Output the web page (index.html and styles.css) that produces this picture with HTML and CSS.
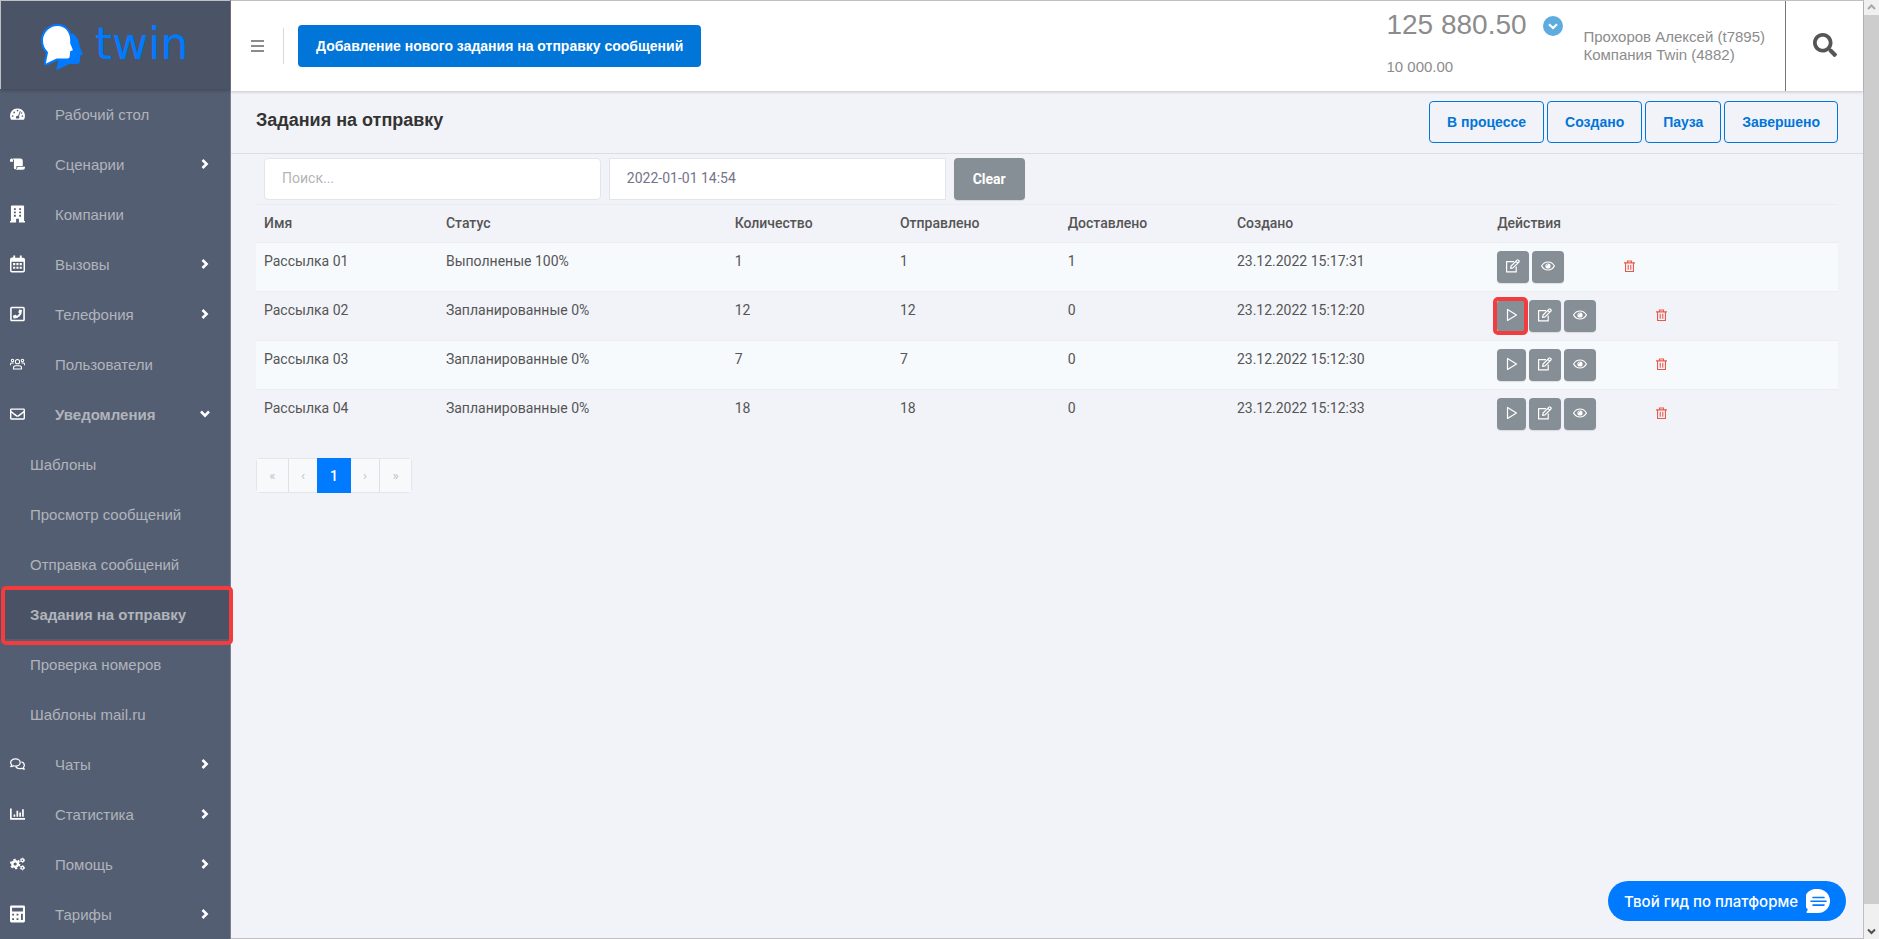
FILE: index.html
```html
<!DOCTYPE html>
<html lang="ru">
<head>
  <meta charset="UTF-8" />
  <title>Задания на отправку</title>
  <link rel="stylesheet" href="styles.css">
</head>
<body>
  <!-- icons -->
  <svg class="sprite" aria-hidden="true">
    <symbol id="i-dash" viewBox="0 0 16 16"><path fill-rule="evenodd" d="M8 2a8 8 0 0 0-7 11.8c.2.3.4.4.7.4h12.600c.3 0 .5-.1.7-.4A8 8 0 0 0 8 2zM8 3.400a.9.9 0 1 1 0 1.800.9.9 0 0 1 0-1.800zM2.800 9.200a.9.9 0 1 1 0 1.800.9.9 0 0 1 0-1.800zM4.400 5.400a.9.9 0 1 1 0 1.800.9.9 0 0 1 0-1.800zM10.600 4.700l.9.4-1.900 5.300a1.700 1.700 0 0 1-.2 2.300H6.700a1.700 1.700 0 0 1 1.900-2.700zM13.200 9.200a.9.9 0 1 1 0 1.800.9.9 0 0 1 0-1.800zM12.400 6a.8.8 0 1 1 0 1.600.8.8 0 0 1 0-1.600z"/></symbol>
    <symbol id="i-scroll" viewBox="0 0 16 16"><path d="M0 3.600A1.600 1.600 0 0 1 3.200 3.600V5.600H.6A.6.6 0 0 1 0 5zM2.500 2H11a2.600 2.600 0 0 1 2.600 2.600V10H6.800v2.200a1.300 1.300 0 0 1-2.600 0V4.500C4.200 3.400 3.500 2.500 2.500 2zM7.800 11H16v.6a2.500 2.500 0 0 1-2.500 2.500H6c1.200-.5 1.800-1.300 1.800-2.100z"/></symbol>
    <symbol id="i-building" viewBox="0 0 16 18"><path fill-rule="evenodd" d="M1 1c0-.6.3-1 1-1h12c.7 0 1 .4 1 1v15.500h1V18H9.500v-4h-3v4H0v-1.500h1zM4.200 2.800v2h2v-2zM9.800 2.800v2h2v-2zM4.200 6.300v2h2v-2zM9.800 6.300v2h2v-2zM4.200 9.800v2h2v-2zM9.800 9.800v2h2v-2z"/></symbol>
    <symbol id="i-calendar" viewBox="0 0 16 18"><path fill-rule="evenodd" d="M3.500 0h2v2.200h5V0h2v2.200H14a2 2 0 0 1 2 2V16a2 2 0 0 1-2 2H2a2 2 0 0 1-2-2V4.200a2 2 0 0 1 2-2h1.500zM1.600 6.500V16c0 .2.2.4.4.4h12c.2 0 .4-.2.4-.4V6.500z"/><path d="M3.300 8h2.300v2.300H3.300zM6.800 8h2.300v2.300H6.800zM10.300 8h2.300v2.300h-2.300zM3.300 11.800h2.300v2.300H3.300zM6.800 11.800h2.300v2.300H6.800zM10.300 11.800h2.300v2.300h-2.300z"/></symbol>
    <symbol id="i-phone" viewBox="0 0 16 16"><rect x="1" y="1" width="14" height="14" rx="1" fill="none" stroke="currentColor" stroke-width="1.700"/><path d="M10.300 3.200l2.100.5c.3.100.4.200.4.500a8.600 8.600 0 0 1-8.600 8.600c-.3 0-.4-.1-.5-.4l-.5-2.100c0-.3.100-.5.300-.6l2.300-.9c.2-.1.400 0 .6.100l.9 1.200a7 7 0 0 0 2.800-2.800L9 6.400c-.2-.2-.2-.4-.1-.600l.9-2.300c.1-.2.300-.4.500-.3z"/></symbol>
    <symbol id="i-users" viewBox="0 0 16 16"><g fill="none" stroke="currentColor" stroke-width="1.100"><circle cx="8" cy="5.500" r="2.300"/><circle cx="2.700" cy="4.200" r="1.300"/><circle cx="13.300" cy="4.200" r="1.300"/><path d="M3.700 13.400v-1.200c0-1.400 1-2.300 2.300-2.300h4c1.300 0 2.300.9 2.300 2.300v1.200zM.5 9.200V8.500c0-1 .6-1.500 1.400-1.500h2M15.500 9.200v-.7c0-1-.6-1.500-1.400-1.500h-2"/></g></symbol>
    <symbol id="i-mail" viewBox="0 0 512 512"><path d="M464 64H48C21.490 64 0 85.490 0 112v288c0 26.510 21.490 48 48 48h416c26.510 0 48-21.490 48-48V112c0-26.510-21.490-48-48-48zm0 48v40.805c-22.422 18.259-58.168 46.651-134.587 106.490-16.841 13.247-50.201 45.072-73.413 44.701-23.208.375-56.579-31.459-73.413-44.701C106.180 199.465 70.425 171.067 48 152.805V112h416zM48 400V214.398c22.914 18.251 55.409 43.862 104.938 82.646 21.857 17.205 60.134 55.186 103.062 54.955 42.717.231 80.509-37.199 103.053-54.947 49.528-38.783 82.032-64.401 104.947-82.653V400H48z"/></symbol>
    <symbol id="i-chats" viewBox="0 0 16 16"><g fill="none" stroke="currentColor" stroke-width="1.300" stroke-linejoin="round"><path d="M5.800 2.600c2.900 0 5.100 1.700 5.100 3.800s-2.200 3.900-5.100 3.900c-.8 0-1.500-.1-2.200-.4-.8.600-1.800.9-2.900.900.6-.6 1-1.300 1.100-2C1.100 8.200.7 7.300.7 6.400c0-2.100 2.200-3.800 5.100-3.800z"/><path d="M12.200 5.800c1.800.5 3.100 1.800 3.100 3.400 0 .9-.4 1.700-1.100 2.400.2.700.5 1.300 1.100 1.900-1.100 0-2.100-.4-2.900-.9-2.700.8-5.300-.1-6.300-1.800"/></g></symbol>
    <symbol id="i-chart" viewBox="0 0 16 16"><path d="M0 2h1.800v10.300H16V14H.8c-.5 0-.8-.3-.8-.8zM3.800 8.500h1.800V11H3.800zM6.900 4.500h1.800V11H6.900zM9.900 6.500h1.800V11H9.900zM12.900 3h1.800v8h-1.800z"/></symbol>
    <symbol id="i-cogs" viewBox="0 0 16 16"><circle cx="5.500" cy="8" r="3" fill="none" stroke="currentColor" stroke-width="2.600"/><circle cx="5.500" cy="8" r="4.700" fill="none" stroke="currentColor" stroke-width="1.800" stroke-dasharray="2.460 2.460"/><g fill="none" stroke="currentColor"><circle cx="13.200" cy="4" r="1.500" stroke-width="1.300"/><circle cx="13.200" cy="4" r="2.300" stroke-dasharray="1.200 1.200"/><circle cx="13.200" cy="12" r="1.500" stroke-width="1.300"/><circle cx="13.200" cy="12" r="2.300" stroke-dasharray="1.200 1.200"/></g></symbol>
    <symbol id="i-calc" viewBox="0 0 16 18"><path fill-rule="evenodd" d="M1.500 0h13A1.500 1.500 0 0 1 16 1.500v15a1.500 1.500 0 0 1-1.500 1.500h-13A1.500 1.500 0 0 1 0 16.500v-15A1.500 1.500 0 0 1 1.500 0zM2.200 2.300v4h11.600v-4zM2.300 8.700v2h2v-2zM7 8.700v2h2v-2zM11.700 8.700v6.700h2V8.700zM2.300 13.400v2h2v-2zM7 13.400v2h2v-2z"/></symbol>
    <symbol id="i-chevron" viewBox="0 0 8 10"><path d="M1.500 1L5.600 5 1.500 9" fill="none" stroke="currentColor" stroke-width="2.600"/></symbol>
    <symbol id="i-play" viewBox="0 0 14 14"><path d="M2.500 1.500v11L11.500 7z" fill="none" stroke="currentColor" stroke-width="1.200" stroke-linejoin="round"/></symbol>
    <symbol id="i-edit" viewBox="0 0 14 14"><g fill="none" stroke="currentColor" stroke-width="1.200" stroke-linejoin="round"><path d="M8 2.600H.6v10.300h9.600V7.500"/><path d="M4.600 9.400l.5-2.400L11 1.100c.4-.4.900-.4 1.300 0l.6.6c.4.400.4.900 0 1.300L7 8.900zM9.800 2.300l1.900 1.900"/></g></symbol>
    <symbol id="i-eye" viewBox="0 0 14 14"><path d="M.6 7C2 4.500 4.300 3 7 3s5 1.500 6.400 4C12 9.500 9.700 11 7 11S2 9.500.6 7z" fill="none" stroke="currentColor" stroke-width="1.200"/><circle cx="7" cy="7" r="2.600"/><path d="M5.600 6.700c0-.7.500-1.200 1.200-1.300" fill="none" stroke="#868e96" stroke-width=".7"/></symbol>
    <symbol id="i-trash" viewBox="0 0 12 14"><path d="M0 3h12M1.700 3v9.400h8.600V3M3.800 2.800V1h4.400v1.800M4.600 5v5.600M7.400 5v5.600" fill="none" stroke="currentColor" stroke-width="1.200"/></symbol>
  </svg>

  <div class="app">
    <aside class="sidebar">
      <a class="logo" href="#" aria-label="twin">
        <svg width="170" height="60" viewBox="0 -10 170 60">
          <path fill="#007bff" d="M31 9c5 3 7 8 7.500 13l3 7.500c.3.800 0 1.300-.8 1.500l-1.500.5-.4 6c-.1 1.600-1 2.500-2.500 2.500H28l-11 5.500c-1 .5-1.700-.2-1.500-1.200l2-8z"/>
          <path fill="#fff" stroke="#007bff" stroke-width="2" stroke-linejoin="round" d="M16.500 1C8 1 1 8 1 16.500c0 5 2 9 5 12L4 38.500c-.3 1.600.6 2.300 2 1.700l10-4.700h10.500c2 0 3-1 3.200-3l.4-4.500 2-.8c.8-.3 1-.8.700-1.500l-2.600-6.500C31 8 25 1 16.500 1z"/>
          <text class="logo-text" x="54" y="35">twin</text>
        </svg>
      </a>
      <nav class="menu">
        <a href="#"><svg class="icon"><use href="#i-dash"/></svg><span>Рабочий стол</span></a>
        <a href="#"><svg class="icon"><use href="#i-scroll"/></svg><span>Сценарии</span><svg class="arrow"><use href="#i-chevron"/></svg></a>
        <a href="#"><svg class="icon"><use href="#i-building"/></svg><span>Компании</span></a>
        <a href="#"><svg class="icon"><use href="#i-calendar"/></svg><span>Вызовы</span><svg class="arrow"><use href="#i-chevron"/></svg></a>
        <a href="#"><svg class="icon"><use href="#i-phone"/></svg><span>Телефония</span><svg class="arrow"><use href="#i-chevron"/></svg></a>
        <a href="#"><svg class="icon"><use href="#i-users"/></svg><span>Пользователи</span></a>
        <a href="#" class="open"><svg class="icon"><use href="#i-mail"/></svg><span>Уведомления</span><svg class="arrow"><use href="#i-chevron"/></svg></a>
        <a href="#" class="sub">Шаблоны</a>
        <a href="#" class="sub">Просмотр сообщений</a>
        <a href="#" class="sub">Отправка сообщений</a>
        <a href="#" class="sub active">Задания на отправку</a>
        <a href="#" class="sub">Проверка номеров</a>
        <a href="#" class="sub">Шаблоны mail.ru</a>
        <a href="#"><svg class="icon"><use href="#i-chats"/></svg><span>Чаты</span><svg class="arrow"><use href="#i-chevron"/></svg></a>
        <a href="#"><svg class="icon"><use href="#i-chart"/></svg><span>Статистика</span><svg class="arrow"><use href="#i-chevron"/></svg></a>
        <a href="#"><svg class="icon"><use href="#i-cogs"/></svg><span>Помощь</span><svg class="arrow"><use href="#i-chevron"/></svg></a>
        <a href="#"><svg class="icon"><use href="#i-calc"/></svg><span>Тарифы</span><svg class="arrow"><use href="#i-chevron"/></svg></a>
      </nav>
    </aside>

    <div class="page">
      <header class="topbar">
        <button class="burger" aria-label="Меню"><i></i><i></i><i></i></button>
        <div class="topbar-add">
          <button class="btn btn-primary">Добавление нового задания на отправку сообщений</button>
        </div>
        <div class="balance">
          <div class="balance-main">125 880.50
            <button class="balance-more" aria-label="Подробнее"><svg width="20" height="20" viewBox="0 0 20 20"><circle cx="10" cy="10" r="10" fill="#5dabdf"/><path d="M6 8.300l4 3.700 4-3.700" fill="none" stroke="#fff" stroke-width="2.200"/></svg></button>
          </div>
          <div class="balance-sub">10 000.00</div>
        </div>
        <div class="user">Прохоров Алексей (t7895)<br>Компания Twin (4882)</div>
        <button class="search" aria-label="Поиск">
          <svg width="24" height="24" viewBox="0 0 512 512"><path d="M505 442.700L405.300 343c-4.500-4.500-10.600-7-17-7H372c27.600-35.300 44-79.700 44-128C416 93.100 322.900 0 208 0S0 93.100 0 208s93.100 208 208 208c48.300 0 92.700-16.400 128-44v16.300c0 6.400 2.500 12.500 7 17l99.700 99.700c9.400 9.400 24.600 9.400 33.900 0l28.300-28.300c9.400-9.400 9.400-24.600.1-34zM208 336c-70.700 0-128-57.200-128-128 0-70.700 57.200-128 128-128 70.700 0 128 57.200 128 128 0 70.700-57.200 128-128 128z"/></svg>
        </button>
      </header>

      <main class="content">
        <div class="subheader">
          <h1>Задания на отправку</h1>
          <div class="statuses">
            <button class="btn btn-outline">В процессе</button>
            <button class="btn btn-outline">Создано</button>
            <button class="btn btn-outline">Пауза</button>
            <button class="btn btn-outline">Завершено</button>
          </div>
        </div>

        <div class="filters">
          <input type="text" class="rounded" placeholder="Поиск..." aria-label="Поиск">
          <input type="text" value="2022-01-01 14:54" aria-label="Дата">
          <button class="btn btn-gray clear">Clear</button>
        </div>

        <table class="tasks">
          <colgroup>
            <col class="c-name"><col class="c-status"><col class="c-count"><col class="c-sent"><col class="c-delivered"><col class="c-created"><col>
          </colgroup>
          <thead>
            <tr><th>Имя</th><th>Статус</th><th>Количество</th><th>Отправлено</th><th>Доставлено</th><th>Создано</th><th>Действия</th></tr>
          </thead>
          <tbody>
            <tr>
              <td>Рассылка 01</td><td>Выполненые 100%</td><td>1</td><td>1</td><td>1</td><td>23.12.2022 15:17:31</td>
              <td><div class="actions">
                <button class="btn-gray" aria-label="Изменить"><svg><use href="#i-edit"/></svg></button>
                <button class="btn-gray" aria-label="Просмотр"><svg><use href="#i-eye"/></svg></button>
                <button class="trash" aria-label="Удалить"><svg><use href="#i-trash"/></svg></button>
              </div></td>
            </tr>
            <tr>
              <td>Рассылка 02</td><td>Запланированные 0%</td><td>12</td><td>12</td><td>0</td><td>23.12.2022 15:12:20</td>
              <td><div class="actions">
                <button class="btn-gray play marked" aria-label="Запустить"><svg><use href="#i-play"/></svg></button>
                <button class="btn-gray" aria-label="Изменить"><svg><use href="#i-edit"/></svg></button>
                <button class="btn-gray" aria-label="Просмотр"><svg><use href="#i-eye"/></svg></button>
                <button class="trash" aria-label="Удалить"><svg><use href="#i-trash"/></svg></button>
              </div></td>
            </tr>
            <tr>
              <td>Рассылка 03</td><td>Запланированные 0%</td><td>7</td><td>7</td><td>0</td><td>23.12.2022 15:12:30</td>
              <td><div class="actions">
                <button class="btn-gray play" aria-label="Запустить"><svg><use href="#i-play"/></svg></button>
                <button class="btn-gray" aria-label="Изменить"><svg><use href="#i-edit"/></svg></button>
                <button class="btn-gray" aria-label="Просмотр"><svg><use href="#i-eye"/></svg></button>
                <button class="trash" aria-label="Удалить"><svg><use href="#i-trash"/></svg></button>
              </div></td>
            </tr>
            <tr>
              <td>Рассылка 04</td><td>Запланированные 0%</td><td>18</td><td>18</td><td>0</td><td>23.12.2022 15:12:33</td>
              <td><div class="actions">
                <button class="btn-gray play" aria-label="Запустить"><svg><use href="#i-play"/></svg></button>
                <button class="btn-gray" aria-label="Изменить"><svg><use href="#i-edit"/></svg></button>
                <button class="btn-gray" aria-label="Просмотр"><svg><use href="#i-eye"/></svg></button>
                <button class="trash" aria-label="Удалить"><svg><use href="#i-trash"/></svg></button>
              </div></td>
            </tr>
          </tbody>
        </table>

        <div class="pagination">
          <button disabled>«</button>
          <button disabled>‹</button>
          <button class="current">1</button>
          <button disabled>›</button>
          <button disabled>»</button>
        </div>
      </main>

      <button class="guide">Твой гид по платформе
        <svg width="24" height="24" viewBox="0 0 24 24"><path fill="#fff" d="M12 0a12 12 0 1 1 0 24H1.500c-1 0-1.300-.8-.8-1.500l1.200-2A12 12 0 0 1 12 0z"/><path d="M7 8.500h11M5 12.300h15M7 16.100h11" stroke="#007bff" stroke-width="1.600" stroke-linecap="round"/></svg>
      </button>
    </div>

    <div class="scrollbar">
      <svg width="15" height="15" viewBox="0 0 15 15"><path d="M4 9l3.500-3.500L11 9" fill="none" stroke="#a8a8a8" stroke-width="2"/></svg>
      <div class="thumb"></div>
      <svg width="15" height="15" viewBox="0 0 15 15"><path d="M4 5.500L7.500 9 11 5.500" fill="none" stroke="#505050" stroke-width="2"/></svg>
    </div>
  </div>
</body>
</html>
```
FILE: styles.css
```css
* {
  box-sizing: border-box;
}
body {
  margin: 0;
  height: 100vh;
  overflow: hidden;
  font-family: Roboto, sans-serif;
  font-size: 14px;
  line-height: 21px;
  color: #555;
  background: #f2f3f8;
}
button {
  font-family: inherit;
  border: 0;
  padding: 0;
  background: none;
}
a {
  color: inherit;
  text-decoration: none;
}
svg {
  display: block;
  fill: currentColor;
}
.sprite {
  display: none;
}
.app {
  display: flex;
  height: 100%;
}

/* sidebar */
.sidebar {
  flex: none;
  width: 231px;
  background: #545e73;
  border-right: 1px solid #7b8296;
}
.logo {
  display: flex;
  height: 89px;
  padding: 13px 0 0 40px;
  background: #4b5467;
  border-top: 1px solid #c0c0c4;
  border-left: 1px solid #c0c0c4;
  box-shadow: 0 2px 3px rgba(0, 0, 0, 0.2);
}
.logo-text {
  font-family: "DejaVu Sans", sans-serif;
  font-size: 44px;
  fill: #007bff;
}
.menu a {
  display: flex;
  align-items: center;
  height: 50px;
  padding: 0 21px 0 10px;
  font-family: "Liberation Sans", sans-serif;
  font-size: 15px;
  color: #b1b4ba;
}
.menu .icon {
  width: 15px;
  height: 18px;
  margin-right: 30px;
  color: #fff;
}
.menu .arrow {
  width: 8px;
  height: 10px;
  margin-left: auto;
  color: #fff;
}
.menu .open,
.menu .active {
  font-weight: bold;
}
.menu .open .arrow {
  transform: rotate(90deg);
}
.menu .sub {
  padding-left: 30px;
}
.menu .active {
  position: relative;
  background: #4a5366;
}
.menu .active::after {
  content: "";
  position: absolute;
  inset: -3px -3px -6px 1px;
  border: 4px solid #f43b3d;
  border-radius: 5px;
}

/* top bar */
.page {
  flex: 1;
  display: flex;
  flex-direction: column;
  border-right: 1px solid #c0c0c4;
  border-bottom: 1px solid #c0c0c4;
}
.topbar {
  display: flex;
  height: 91px;
  background: #fff;
  border-top: 1px solid #c0c0c4;
  box-shadow: 0 1px 3px rgba(0, 0, 0, 0.2);
  font-family: "Liberation Sans", sans-serif;
  font-size: 15px;
  line-height: 18px;
  color: #8c8c8c;
}
.burger {
  display: flex;
  flex-direction: column;
  justify-content: center;
  gap: 3px;
  width: 13px;
  height: 36px;
  margin: 27px 19px 0 20px;
}
.burger i {
  height: 2px;
  background: #8c8c8c;
}
.topbar-add {
  height: 36px;
  margin-top: 27px;
  padding-left: 14px;
  border-left: 1px solid #d8d8dc;
}
.btn {
  height: 42px;
  padding: 0 17px;
  border: 1px solid transparent;
  border-radius: 4px;
  font-family: "Liberation Sans", sans-serif;
  font-size: 14px;
  font-weight: bold;
}
.btn-primary {
  margin-top: -3px;
  background: #0275d8;
  color: #fff;
}
.balance {
  width: 197px;
  margin-left: auto;
  padding-top: 8px;
}
.balance-main {
  display: flex;
  align-items: center;
  gap: 16px;
  height: 32px;
  font-size: 28px;
}
.balance-more {
  margin-top: 2px;
}
.balance-sub {
  margin-top: 17px;
}
.user {
  padding: 27px 20px 0 0;
}
.search {
  width: 78px;
  padding: 0 0 2px 27px;
  border-left: 1px solid #777;
  color: #555;
}

/* content */
.content {
  flex: 1;
}
.subheader {
  display: flex;
  justify-content: space-between;
  height: 63px;
  padding: 10px 25px 0;
  border-bottom: 1px solid #dcdde3;
}
h1 {
  margin: 8px 0 0;
  font-family: "Liberation Sans", sans-serif;
  font-size: 18px;
  line-height: 22px;
  color: #333;
}
.statuses {
  display: flex;
  gap: 3px;
}
.btn-outline {
  border-color: #0275d8;
  color: #0275d8;
}
.filters {
  display: flex;
  gap: 8px;
  padding: 4px 25px 4px 33px;
}
.filters input {
  width: 21.4%;
  height: 42px;
  padding: 0 17px 2px;
  border: 1px solid #e2e5ec;
  font-family: Roboto, sans-serif;
  font-size: 14px;
  color: #74738a;
  background: #fff;
}
.filters .rounded {
  border-radius: 4px;
}
.filters input::placeholder {
  color: #b4b4b8;
}
.btn-gray {
  background: #868e96;
  color: #fff;
  border-radius: 4px;
  box-shadow: 0 1px 1px rgba(0, 0, 0, 0.1);
}
.filters .clear {
  padding: 0 18px;
  font-family: Roboto, sans-serif;
}
.tasks {
  width: calc(100% - 50px);
  margin: 0 25px;
  border-collapse: separate;
  border-spacing: 0;
  table-layout: fixed;
}
.c-name { width: 11.5%; }
.c-status { width: 18.25%; }
.c-count { width: 10.45%; }
.c-sent { width: 10.6%; }
.c-delivered { width: 10.7%; }
.c-created { width: 16.45%; }
.tasks th,
.tasks td {
  padding: 8px;
  border-top: 1px solid #ebedf0;
  text-align: left;
  vertical-align: top;
}
.tasks th {
  font-weight: 500;
}
.tasks tbody tr:nth-child(odd) {
  background: #f7fafd;
}
.actions {
  display: flex;
  gap: 3px;
}
.actions button {
  display: flex;
  align-items: center;
  justify-content: center;
  width: 32px;
  height: 32px;
  padding-bottom: 2px;
}
.actions svg {
  width: 14px;
  height: 14px;
}
.actions .play {
  width: 29px;
}
.actions .marked {
  position: relative;
}
.actions .marked::after {
  content: "";
  position: absolute;
  inset: -3px -2px -3px -4px;
  border: 4px solid #f43b3d;
  border-radius: 5px;
}
.actions .trash {
  width: 12px;
  margin-left: 56px;
  color: #e8594a;
}
.actions .trash svg {
  width: 11px;
  height: 13px;
}
.pagination {
  display: flex;
  width: max-content;
  margin: 20px 25px;
  border: 1px solid #e4e5e8;
  border-radius: 4px;
}
.pagination button {
  width: 32px;
  height: 33px;
  background: #f8f9fb;
  color: #c0c2c6;
}
.pagination button:first-child {
  border-right: 1px solid #e0e1e4;
}
.pagination button:last-child {
  border-left: 1px solid #e0e1e4;
}
.pagination button:nth-child(even) {
  width: 28px;
}
.pagination .current {
  width: 34px;
  height: 35px;
  margin: -1px 0;
  background: #007bff;
  color: #fff;
  font-size: 14px;
  font-weight: 500;
}

/* help button over the page */
.guide {
  position: fixed;
  right: 33px;
  bottom: 18px;
  display: flex;
  align-items: center;
  gap: 8px;
  height: 40px;
  padding: 0 16px;
  border-radius: 20px;
  background: #007bff;
  color: #fff;
  font-family: Inter, sans-serif;
  font-size: 15px;
  font-weight: 500;
}

/* scrollbar */
.scrollbar {
  display: flex;
  flex-direction: column;
  flex: none;
  width: 15px;
  background: #f0f0f0;
}
.thumb {
  flex: 1;
  margin-bottom: 20px;
  background: #cdcdcd;
}
```
